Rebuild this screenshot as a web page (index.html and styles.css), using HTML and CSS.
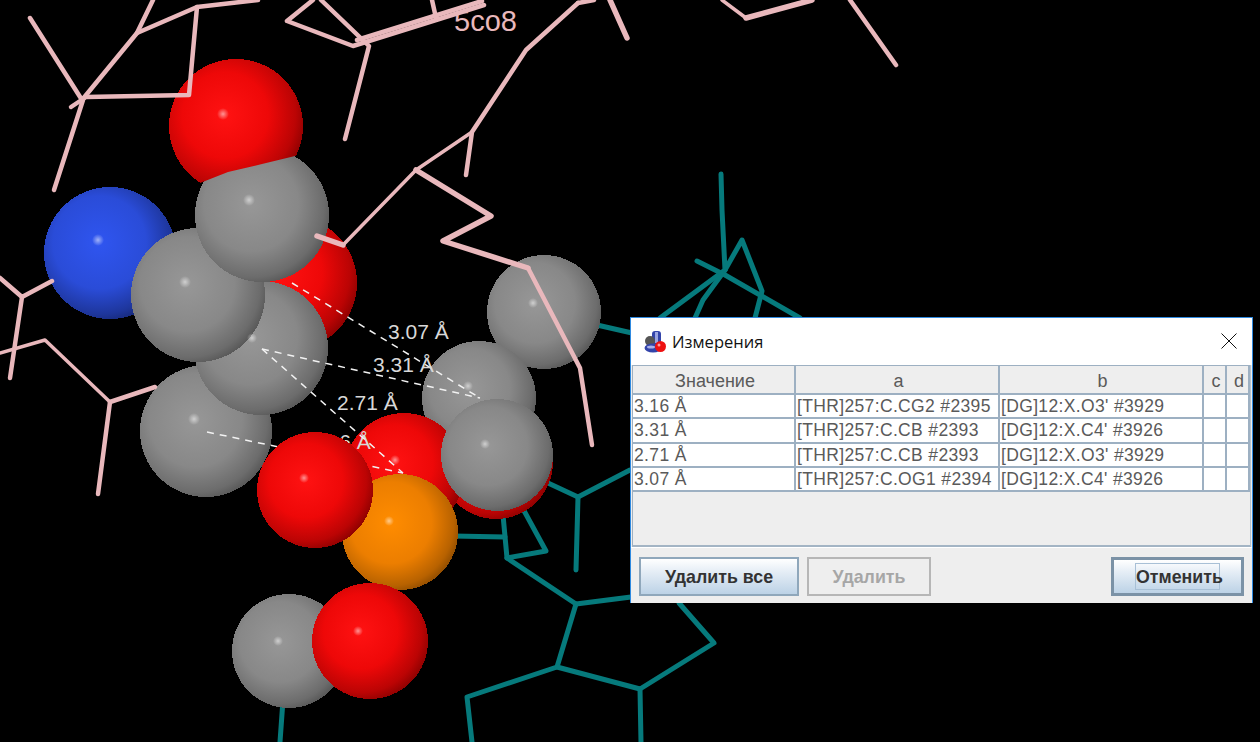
FILE: index.html
```html
<!DOCTYPE html>
<html lang="ru">
<head>
<meta charset="utf-8">
<title>Измерения</title>
<link rel="stylesheet" href="styles.css">
</head>
<body>
<svg class="scene" viewBox="0 0 1260 742" width="1260" height="742" xmlns="http://www.w3.org/2000/svg">
  <defs>
    <radialGradient id="red" cx="0.42" cy="0.42" r="0.64"><stop offset="0" stop-color="#ff1212"/><stop offset="0.5" stop-color="#ee0808"/><stop offset="0.82" stop-color="#bb0404"/><stop offset="1" stop-color="#820000"/></radialGradient>
    <radialGradient id="grey" cx="0.42" cy="0.42" r="0.64"><stop offset="0" stop-color="#979797"/><stop offset="0.55" stop-color="#888"/><stop offset="0.85" stop-color="#6c6c6c"/><stop offset="1" stop-color="#505050"/></radialGradient>
    <radialGradient id="blue" cx="0.42" cy="0.42" r="0.64"><stop offset="0" stop-color="#2f55f0"/><stop offset="0.55" stop-color="#2a4cd8"/><stop offset="0.85" stop-color="#1e369c"/><stop offset="1" stop-color="#14246c"/></radialGradient>
    <radialGradient id="orange" cx="0.42" cy="0.42" r="0.64"><stop offset="0" stop-color="#ff8c00"/><stop offset="0.55" stop-color="#ec7e00"/><stop offset="0.85" stop-color="#b86200"/><stop offset="1" stop-color="#844600"/></radialGradient>
    <radialGradient id="spot"><stop offset="0" stop-color="#fff" stop-opacity="0.55"/><stop offset="0.45" stop-color="#fff" stop-opacity="0.3"/><stop offset="1" stop-color="#fff" stop-opacity="0"/></radialGradient>
    <clipPath id="above-carbon"><polygon points="100,0 400,0 400,130 295,156 262,164 228,172 200,183 160,200 100,200"/></clipPath>
  </defs>

  <g class="bonds teal">
    <polyline points="721,174 722,210 725,270 660,318"/>
    <polyline points="697,261 725,275 800,318"/>
    <polyline points="725,270 703,300 695,318"/>
    <polyline points="725,270 742,240 762,291 755,318"/>
    <polyline points="597,325 632,333"/>
    <polyline points="453,536 505,537"/>
    <polyline points="503,515 507,558 546,551 522,507"/>
    <polyline points="507,558 576,604 631,597"/>
    <polyline points="576,604 557,667 467,697 472,742"/>
    <polyline points="557,667 640,689 714,643 679,603"/>
    <polyline points="640,689 641,742"/>
    <polyline points="548,483 578,497 630,470"/>
    <polyline points="578,497 576,570"/>
    <polyline points="283,700 280,742"/>
  </g>

  <g class="spheres">
    <circle cx="110" cy="253" r="66" fill="url(#blue)"/>
    <circle cx="290" cy="283" r="67" fill="url(#red)"/>
    <circle cx="206" cy="431" r="66" fill="url(#grey)"/>
    <circle cx="261" cy="348" r="67" fill="url(#grey)"/>
    <circle cx="198" cy="295" r="67" fill="url(#grey)"/>
    <circle cx="262" cy="215" r="67" fill="url(#grey)"/>
    <circle cx="236" cy="126" r="67" fill="url(#red)" clip-path="url(#above-carbon)"/>
    <circle cx="544" cy="312" r="57" fill="url(#grey)"/>
    <circle cx="496" cy="462" r="57" fill="url(#red)"/>
    <circle cx="479" cy="398" r="57" fill="url(#grey)"/>
    <circle cx="404" cy="473" r="60" fill="url(#red)"/>
    <circle cx="497" cy="455" r="56" fill="url(#grey)"/>
  </g>
  <circle cx="98" cy="240" r="6" fill="url(#spot)"/>
  <circle cx="194" cy="419" r="6" fill="url(#spot)"/>
  <circle cx="252" cy="338" r="5" fill="url(#spot)"/>
  <circle cx="185" cy="282" r="6" fill="url(#spot)"/>
  <circle cx="249" cy="200" r="6" fill="url(#spot)"/>
  <circle cx="223" cy="114" r="6" fill="url(#spot)"/>
  <circle cx="533" cy="303" r="5" fill="url(#spot)"/>
  <circle cx="468" cy="386" r="5" fill="url(#spot)"/>
  <circle cx="395" cy="460" r="5" fill="url(#spot)"/>
  <circle cx="485" cy="444" r="5" fill="url(#spot)"/>

  <text class="label" x="310" y="449">3.16 Å</text>
  <polyline class="dash" points="207,432 403,473"/>
  <polyline class="dash" points="262,349 403,473"/>
  <polyline class="dash" points="262,349 480,398"/>
  <polyline class="dash" points="292,283 480,398"/>

  <g class="spheres">
    <circle cx="400" cy="532" r="58" fill="url(#orange)"/>
    <circle cx="315" cy="490" r="58" fill="url(#red)"/>
    <circle cx="289" cy="651" r="57" fill="url(#grey)"/>
    <circle cx="370" cy="641" r="58" fill="url(#red)"/>
  </g>
  <circle cx="389" cy="521" r="5" fill="url(#spot)"/>
  <circle cx="304" cy="478" r="5" fill="url(#spot)"/>
  <circle cx="278" cy="641" r="5" fill="url(#spot)"/>
  <circle cx="358" cy="631" r="5" fill="url(#spot)"/>

  <text class="label" x="388" y="339">3.07 Å</text>
  <text class="label" x="373" y="372">3.31 Å</text>
  <text class="label" x="337" y="410">2.71 Å</text>

  <g class="bonds pink">
    <polyline points="30,18 82,100 137,33 197,7 258,0"/>
    <polyline points="137,33 153,0"/>
    <polyline points="71,107 86,97 189,95 197,7"/>
    <polyline points="83,100 54,190"/>
    <polyline points="313,0 287,21 353,46 484,5"/>
    <polyline points="357,40 482,1"/>
    <polyline points="321,0 369,46 345,139"/>
    <polyline points="432,0 436,18"/>
    <polyline points="578,3 526,50 472,132 466,175"/>
    <polyline points="578,3 594,0"/>
    <polyline class="thick" points="610,0 627,38"/>
    <polyline class="thin" points="472,132 416,170 343,245"/>
    <polyline class="thick" points="343,245 317,236"/>
    <polyline class="thick" points="416,170 491,216 443,241 528,268"/>
    <polyline points="528,268 580,368 592,445"/>
    <polyline class="thin" points="722,0 746,18"/>
    <polyline class="thick" points="746,18 812,0"/>
    <polyline points="850,0 896,65"/>
    <polyline points="0,278 22,297 52,281"/>
    <polyline points="22,297 10,378"/>
    <polyline class="thin" points="0,353 45,340 110,402"/>
    <polyline points="110,402 98,494"/>
    <polyline points="110,402 155,387"/>
  </g>
  <text class="pdb" x="454" y="31">5co8</text>
</svg>

<section class="window">
  <header class="titlebar">
    <svg class="app-icon" viewBox="0 0 22 23" width="22" height="23" xmlns="http://www.w3.org/2000/svg">
      <rect x="8" y="1" width="9" height="15" rx="3" fill="#3344aa"/>
      <rect x="11" y="2" width="3" height="11" fill="#9aa4e0"/>
      <circle cx="6" cy="11" r="5" fill="#555"/>
      <ellipse cx="9" cy="18" rx="8.500" ry="4.500" fill="#3344aa"/>
      <ellipse cx="7" cy="17" rx="4" ry="1.500" fill="#aab2ea"/>
      <circle cx="16.500" cy="16.500" r="5.500" fill="#ee1111"/>
      <circle cx="15" cy="15" r="1.500" fill="#ff9a9a"/>
    </svg>
    <span class="title">Измерения</span>
    <svg class="close" viewBox="0 0 16 16" width="16" height="16" xmlns="http://www.w3.org/2000/svg"><path d="M0.500 0.500 L15.500 15.500 M15.500 0.500 L0.500 15.500"/></svg>
  </header>
  <div class="pane">
    <table class="grid">
      <colgroup><col class="c-val"><col class="c-atom"><col class="c-atom"><col class="c-mini"><col class="c-mini"></colgroup>
      <thead><tr><th>Значение</th><th>a</th><th>b</th><th>c</th><th>d</th></tr></thead>
      <tbody>
        <tr><td>3.16 Å</td><td>[THR]257:C.CG2 #2395</td><td>[DG]12:X.O3' #3929</td><td></td><td></td></tr>
        <tr><td>3.31 Å</td><td>[THR]257:C.CB #2393</td><td>[DG]12:X.C4' #3926</td><td></td><td></td></tr>
        <tr><td>2.71 Å</td><td>[THR]257:C.CB #2393</td><td>[DG]12:X.O3' #3929</td><td></td><td></td></tr>
        <tr><td>3.07 Å</td><td>[THR]257:C.OG1 #2394</td><td>[DG]12:X.C4' #3926</td><td></td><td></td></tr>
      </tbody>
    </table>
  </div>
  <footer class="actions">
    <button class="btn btn-all" type="button">Удалить все</button>
    <button class="btn btn-del" type="button" disabled>Удалить</button>
    <button class="btn btn-cancel" type="button"><span class="focus">Отменить</span></button>
  </footer>
</section>
</body>
</html>
```
FILE: styles.css
```css
* { box-sizing: border-box; }
html, body { margin: 0; height: 100%; }
body {
  position: relative;
  width: 1260px;
  height: 742px;
  overflow: hidden;
  background: #000;
  font-family: "Liberation Sans", Arial, sans-serif;
}

/* molecular canvas */
.scene { display: block; }
.spheres circle { shape-rendering: crispEdges; }
.bonds polyline { fill: none; stroke-width: 4.500; stroke-linejoin: round; stroke-linecap: round; }
.teal polyline { stroke: #067a7c; stroke-width: 5; }
.pink polyline { stroke: #e9b8bc; }
.pink .thin { stroke-width: 3.500; }
.pink .thick { stroke-width: 5.500; }
.dash { fill: none; stroke: #f2f2f2; stroke-width: 1.500; stroke-dasharray: 7 6; }
.label { fill: #d8d8d8; font-size: 21px; font-family: "Liberation Sans", Arial, sans-serif; }
.pdb { fill: #e9b8bc; font-size: 29px; font-family: "Liberation Sans", Arial, sans-serif; }

/* dialog */
.window {
  position: absolute;
  left: 630px;
  top: 317px;
  width: 623px;
  height: 286px;
  display: flex;
  flex-direction: column;
  background: #eee;
  border: 1px solid #2f8ae0;
  border-bottom: 0;
}
.titlebar {
  height: 47px;
  flex: none;
  display: flex;
  align-items: center;
  background: #fff;
  padding: 0 15px 0 13px;
}
.app-icon { flex: none; margin-right: 6px; }
.title { font: 16.500px "Open Sans", "Noto Sans", sans-serif; color: #111; }
.close { margin-left: auto; margin-top: -1px; }
.close path { fill: none; stroke: #111; stroke-width: 1; }

.pane {
  height: 182px;
  flex: none;
  margin-left: 1px;
  margin-right: 1px;
  background: #eee;
  border-left: 1px solid #9db0c2;
  border-right: 1px solid #b4c2cf;
  border-bottom: 2px solid #a3b4c4;
}
.grid {
  table-layout: fixed;
  width: 617px;
  border-collapse: separate;
  border-spacing: 0;
  color: #5a5a5a;
}
.c-val { width: 163px; }
.c-atom { width: 204px; }
.c-mini { width: 23px; }
.grid th {
  height: 30px;
  padding: 3px 0 0 3px;
  font-size: 18px;
  font-weight: normal;
  text-align: center;
  background: #eee;
  border-top: 1px solid #9db0c2;
  border-right: 2px solid #9db0c2;
  border-bottom: 2px solid #9db0c2;
}
.grid td {
  height: 24.300px;
  padding: 1px 0 0 1px;
  font-size: 17.500px;
  line-height: 21px;
  letter-spacing: 0.350px;
  white-space: nowrap;
  overflow: hidden;
  background: #fff;
  border-right: 2px solid #9db0c2;
  border-bottom: 2px solid #9db0c2;
}

.actions {
  flex: 1;
  display: flex;
  align-items: flex-start;
  gap: 8px;
  padding: 9px 8px 0 8px;
  background: #eee;
  border-top: 1px solid #fff;
}
.btn {
  height: 39px;
  padding: 2px 0 0;
  font: bold 17.800px "Liberation Sans", Arial, sans-serif;
  color: #333;
  background: linear-gradient(#fff 0%, #e6eef6 35%, #bcd2e6 100%);
  border: 2px solid #8fa7bb;
}
.btn-all { width: 160px; }
.btn-del {
  width: 124px;
  color: #a6a6a6;
  background: #eee;
  border-color: #b6b6b6;
}
.btn-cancel {
  width: 133px;
  margin-left: auto;
  padding: 0;
  border: 3px solid #7b92a6;
  display: flex;
  align-items: center;
  justify-content: center;
}
.focus {
  display: block;
  width: 85px;
  height: 27px;
  line-height: 27px;
  text-align: center;
  border: 1px solid #a8c0d6;
}
```
